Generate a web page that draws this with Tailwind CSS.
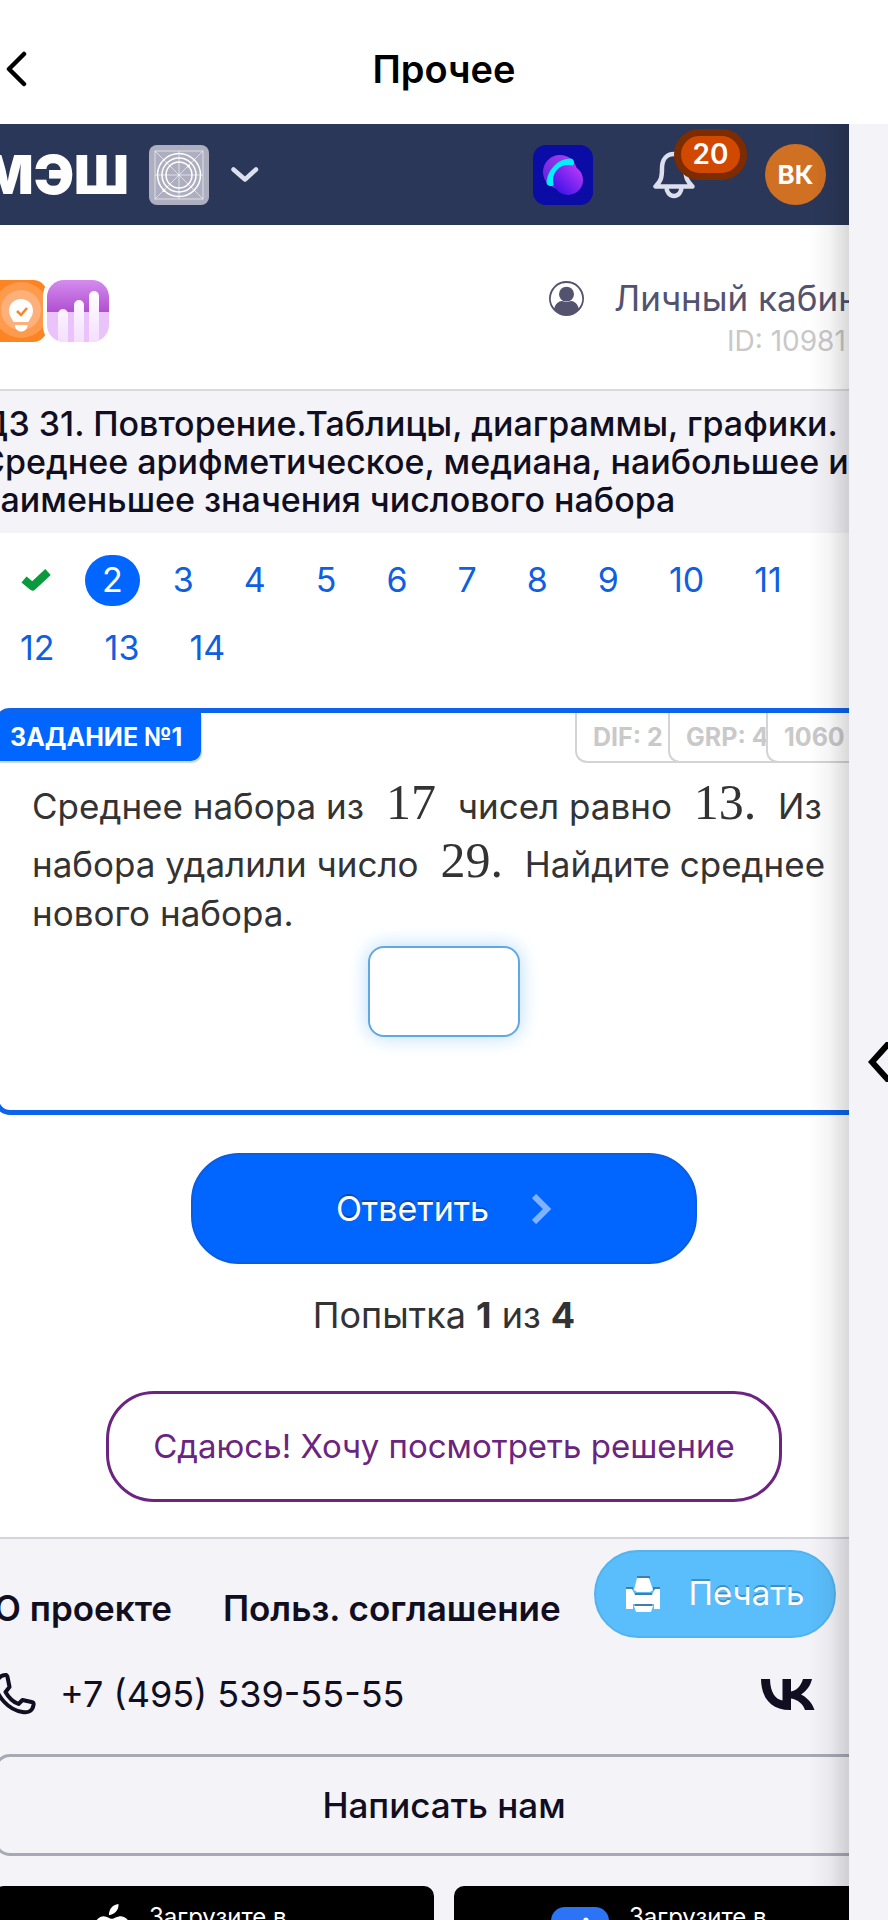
<!DOCTYPE html>
<html lang="ru">
<head>
  <meta charset="UTF-8" />
  <meta name="viewport" content="width=device-width, initial-scale=1.0" />
  <title>Прочее</title>
  <script src="https://cdn.jsdelivr.net/npm/@tailwindcss/browser@4"></script>
</head>
<body class="h-screen flex flex-col overflow-hidden bg-[#f3f3f8] font-['Inter',sans-serif] text-[#333]">

  <!-- App bar -->
  <header class="h-[124px] shrink-0 grid grid-cols-[48px_1fr_48px] items-center pt-[14px] bg-white text-black">
    <button type="button" aria-label="Назад" class="pl-[5px]">
      <svg class="w-6 h-9" viewBox="0 0 24 36" fill="none" stroke="currentColor" stroke-width="4.500" stroke-linecap="round" stroke-linejoin="round"><path d="M19 3 4 18l15 15" /></svg>
    </button>
    <h1 class="text-center text-[38px] leading-[48px] font-semibold">Прочее</h1>
  </header>

  <div class="flex flex-1 min-h-0">
    <!-- Page, wider than the panel it is shown in -->
    <div class="relative flex-1 min-w-0 overflow-hidden bg-white">
      <div class="-ml-10 -mr-[79px]">

        <nav class="h-[101px] flex items-center pl-[22px] pr-[102px] bg-[#2b3758]">
          <a href="#" class="text-white text-[54px] leading-[60px] font-black">МЭШ</a>
          <svg class="w-[60px] h-[60px] ml-5" viewBox="0 0 60 60" fill="none" stroke="#fff">
            <rect width="60" height="60" rx="8" fill="#adafc0" stroke="none" />
            <g stroke-opacity=".6"><rect x="6" y="6" width="48" height="48" /><path d="M6 6l48 48M54 6 6 54M6 30h48M30 6v48" /></g>
            <circle cx="30" cy="30" r="21.500" stroke-width="1.500" /><circle cx="30" cy="30" r="17" stroke-width="1.500" /><circle cx="30" cy="30" r="13" stroke-width="1.500" />
            <circle cx="39.500" cy="21" r="1.500" fill="#fff" stroke="none" /><circle cx="15" cy="45.500" r="1.500" fill="#fff" stroke="none" />
          </svg>
          <button type="button" aria-label="Разделы" class="ml-[22px]">
            <svg class="w-7 h-4" viewBox="0 0 28 16" fill="none" stroke="#dcdfee" stroke-width="4.500" stroke-linecap="round" stroke-linejoin="round"><path d="m2.500 2.500 11.500 10 11-10" /></svg>
          </button>
          <a href="#" aria-label="Помощник" class="ml-auto">
            <svg class="w-[60px] h-[60px]" viewBox="0 0 60 60">
              <defs>
                <linearGradient id="orb" x1="0" y1="1" x2="1" y2="0"><stop offset=".1" stop-color="#3a12e8" /><stop offset="1" stop-color="#c83cfa" /></linearGradient>
                <linearGradient id="orb2" x1="0" y1="1" x2="1" y2="0"><stop offset="0" stop-color="#5a20d8" /><stop offset="1" stop-color="#b040f5" /></linearGradient>
              </defs>
              <rect width="60" height="60" rx="13" fill="#0b0ba6" />
              <circle cx="27" cy="27" r="17" fill="url(#orb2)" />
              <path d="M17.500 37C18.500 27 27 18 37 17.500" fill="none" stroke="#00f0ff" stroke-width="8" stroke-linecap="round" />
              <circle cx="35" cy="35" r="15" fill="url(#orb)" />
            </svg>
          </a>
          <button type="button" aria-label="Уведомления, 20" class="relative ml-[60px] w-[42px] h-12">
            <svg class="w-[42px] h-12" viewBox="0 0 42 48" fill="none" stroke="#dcdfee" stroke-width="4.500" stroke-linejoin="round" stroke-linecap="round"><path d="M2.500 35.500h37c-5-5-7-8-7-18C32.500 8 28 3 21 3S9 8 9 17.500c0 10-1.500 13-6.500 18ZM13.500 36c0 5 3 9 7.500 9s7.500-4 7.500-9" /></svg>
            <span class="absolute left-[21px] -top-[22px] w-[73px] h-[51px] flex items-center justify-center rounded-full border-[7px] border-[#7d2b00] bg-[#d14900] text-white text-[28px] leading-8 font-semibold">20</span>
          </button>
          <a href="#" class="w-[61px] h-[61px] ml-[70px] rounded-full bg-[#d07022] text-white text-[26px] font-bold flex items-center justify-center">ВК</a>
        </nav>

        <div class="h-[166px] flex pl-6 border-b-2 border-[#d9d9e0]">
          <div class="flex pt-[54px]">
            <svg class="w-[64px] h-[64px]" viewBox="0 0 64 64">
              <rect x="1" y="1" width="62" height="62" rx="14" fill="#fc8423" />
              <circle cx="37" cy="31" r="28" fill="#fd9a4c" /><circle cx="37" cy="31" r="20" fill="#feb07a" />
              <path d="M37 20c-7 0-12 5-12 11.500 0 5 2.500 7 4.500 11.500h15c2-4.500 4.500-6.500 4.500-11.500C49 25 44 20 37 20ZM31 46h12.500c0 4-2.500 6.500-6.200 6.500S31 50 31 46Z" fill="#fff" />
              <path d="m33 32 4 4 6-7" fill="none" stroke="#fc8423" stroke-width="2.500" />
            </svg>
            <svg class="w-[70px] h-[70px] -ml-[5px] -mt-[2px]" viewBox="-1 0 70 70">
              <defs>
                <linearGradient id="dusk" x1="0" y1="0" x2="0" y2="1"><stop offset="0" stop-color="#d48cee" /><stop offset="1" stop-color="#b04fd0" /></linearGradient>
                <linearGradient id="bar" x1="0" y1="0" x2="0" y2="1"><stop offset="0" stop-color="#fff" /><stop offset="1" stop-color="#f3dcfd" /></linearGradient>
                <clipPath id="tile"><rect x="3" y="3" width="62" height="62" rx="17" /></clipPath>
              </defs>
              <rect x="-1" y="-1" width="70" height="70" rx="20" fill="#fff" />
              <g clip-path="url(#tile)">
                <path d="M3 3h62v32H3z" fill="url(#dusk)" /><path d="M3 35h62v31H3z" fill="#eac3fb" />
                <path d="M14 70V37a5 5 0 0 1 10 0v33ZM30 70V28a5 5 0 0 1 10 0v42ZM45 70V19a5 5 0 0 1 10 0v51Z" fill="url(#bar)" />
              </g>
            </svg>
          </div>
          <div class="ml-auto w-[379px] pt-[51px] whitespace-nowrap">
            <a href="#" class="flex items-center text-[#535370] text-[35px] leading-[44px]">
              <svg class="w-[35px] h-[35px] mr-[30px]" viewBox="0 0 36 36" fill="currentColor"><path d="M18 0a18 18 0 1 0 0 36 18 18 0 0 0 0-36Zm0 2a16 16 0 0 1 12.500 26c-1-5-5.500-8-8-7.500q-4.500 2-9 0C11 20 6.500 23 5.500 28A16 16 0 0 1 18 2Z" /><circle cx="18" cy="13.500" r="7.700" /></svg>
              Личный кабинет
            </a>
            <p class="pl-[178px] text-[28px] leading-[42px] text-[#c8c8c8]">ID: 10981</p>
          </div>
        </div>

        <h2 class="pl-5 py-[14px] bg-[#f3f3f8] text-[#100e20] text-[34px] leading-[38px] font-medium whitespace-nowrap">
          ДЗ 31. Повторение.Таблицы, диаграммы, графики.<br />
          Среднее арифметическое, медиана, наибольшее и<br />
          наименьшее значения числового набора
        </h2>

        <ol class="flex flex-wrap gap-x-4 gap-y-[17px] pt-[22px] pl-[43px] pr-[120px] text-[34px] text-[#0f5fe0] [&_a]:flex [&_a]:items-center [&_a]:h-[51px] [&_a]:px-[17px] [&_a]:pb-[2px] [&_a]:rounded-full">
          <li><a href="#" aria-label="1, решено"><svg class="w-8 h-6" viewBox="0 0 32 24" fill="none" stroke="#089a3c" stroke-width="8"><path d="M4 11.500 12.500 18.500 28 4" stroke-linejoin="round" /></svg></a></li>
          <li><a href="#" class="bg-[#0066ff] text-white">2</a></li>
          <li><a href="#">3</a></li>
          <li><a href="#">4</a></li>
          <li><a href="#">5</a></li>
          <li><a href="#">6</a></li>
          <li><a href="#">7</a></li>
          <li><a href="#">8</a></li>
          <li><a href="#">9</a></li>
          <li><a href="#">10</a></li>
          <li><a href="#">11</a></li>
          <li><a href="#">12</a></li>
          <li><a href="#">13</a></li>
          <li><a href="#">14</a></li>
        </ol>

        <form>
          <section class="mt-[34px] mx-[34px] pb-[73px] border-[5px] border-[#0b63ee] rounded-2xl">
            <div class="flex h-[50px] text-[25px] leading-8 font-bold whitespace-nowrap">
              <h3 class="h-[48px] pl-[11px] pr-[19px] pt-2 rounded-br-[10px] bg-[#0066ff] text-white shadow-[1px_2px_1px_#c9dbf8]">ЗАДАНИЕ №1</h3>
              <ul class="flex ml-auto w-[314px] text-[#c9c9c9] [&_li]:pl-4 [&_li]:pt-2 [&_li]:border-b-2 [&_li]:border-l-2 [&_li]:border-[#d4d4d4] [&_li]:rounded-bl-xl">
                <li class="w-[105px] -mr-3 shrink-0">DIF: 2</li>
                <li class="w-[110px] -mr-3 shrink-0">GRP: 4</li>
                <li class="flex-1">1060</li>
              </ul>
            </div>
            <p class="pt-[10px] pl-[33px] text-[35px] leading-[48px] whitespace-nowrap">
              Среднее набора из <span class="mx-3 text-[50px] leading-[58px] font-['Liberation_Serif',serif]">17</span> чисел равно <span class="mx-3 text-[50px] leading-[58px] font-['Liberation_Serif',serif]">13.</span> Из<br />
              набора удалили число <span class="mx-3 text-[50px] leading-[58px] font-['Liberation_Serif',serif]">29.</span> Найдите среднее<br />
              нового набора.
            </p>
            <input type="text" aria-label="Ответ" class="block mx-auto mt-[9px] w-[152px] h-[91px] rounded-2xl border-2 border-[#62a8e0] bg-white text-center text-[35px] shadow-[0_0_20px_#b5daf8] outline-none" />
          </section>

          <div class="mt-[38px] flex flex-col items-center">
            <button type="submit" class="w-[506px] h-[111px] flex items-center justify-center gap-[43px] rounded-[48px] border-2 border-[#0a5ce0] bg-[#0066ff] text-white text-[34px] [text-shadow:0_-2px_0_#0a4bb0]">
              Ответить
              <svg class="w-5 h-[30px]" viewBox="0 0 20 30" fill="none" stroke="#7fb2ff" stroke-width="6"><path d="m2 2 13 13L2 28" /></svg>
            </button>
            <p class="mt-7 text-[36px] leading-[46px]">Попытка <b>1</b> из <b>4</b></p>
            <button type="button" class="mt-[53px] w-[676px] h-[111px] rounded-[48px] border-[3px] border-[#6b2480] text-[#6b2480] text-[33px]">Сдаюсь! Хочу посмотреть решение</button>
          </div>
        </form>

        <footer class="relative mt-[35px] h-[600px] px-[34px] border-t-2 border-[#d3d3dc] bg-[#f3f3f8] text-[#100e20] text-[35px]">
          <div class="flex gap-[51px] pt-[47px] leading-[44px] font-semibold">
            <a href="#">О проекте</a>
            <a href="#">Польз. соглашение</a>
          </div>
          <div class="flex items-center justify-between mt-[42px] pr-[79px] leading-[44px]">
            <a href="tel:+74955395555" class="flex items-center gap-6 text-[36px]">
              <svg class="w-[42px] h-[42px]" viewBox="0 0 42 42" fill="none" stroke="currentColor" stroke-width="4" stroke-linejoin="round"><path d="M11 2Q13 1.500 13.500 4l2 10-4 5q5 9 13 12l4-4 9 2q2.500.5 2 3c-1 6-5 8-11 7C14 37 2 22 2 12 2 7 6 2.500 11 2Z" /></svg>
              +7 (495) 539-55-55
            </a>
            <a href="#" aria-label="ВКонтакте">
              <svg class="w-[54px] h-[31px]" viewBox="0 0 54 31" fill="currentColor"><path d="M0 0h9c.3 14 6 20.500 12.500 21.500V0H30v12.500C35 12 40 7 42 0h9c-1.500 7-6 12.500-11 15.500C45 18 51 23 53.500 31H44c-2-6-7-10.500-14-11.500V31h-1C10 31 .3 19 0 0Z" /></svg>
            </a>
          </div>
          <button type="button" class="mt-[38px] w-full h-[102px] rounded-2xl border-[3px] border-[#a9a9b5] text-[35px] font-medium">Написать нам</button>
          <div class="grid grid-cols-2 gap-5 mt-[30px] text-white text-[24px] leading-7">
            <a href="#" class="flex gap-[20px] pt-[17px] pl-[100px] h-[104px] rounded-[10px] bg-black">
              <svg class="w-[35px] h-[42px]" viewBox="0 0 40 48" fill="#fff"><path d="M17 14C17 7 21 2 28 1c.5 7-4 12-11 13ZM20 18c3 0 6-3 11-3q5 .5 8 5c-7 5-6 14 1 17-3 7-6 10-9 10s-5-2-10-2-6 2-9 2C5 47-2 36 1 25c1-7 6-10 10-10s7 3 9 3Z" /></svg>
              <span>Загрузите в</span>
            </a>
            <a href="#" class="flex gap-5 pt-[17px] pl-[97px] h-[104px] rounded-[10px] bg-black">
              <svg class="w-[58px] h-[62px]" viewBox="0 -4 58 62"><rect width="58" height="58" rx="14" fill="#2d73f5" /><path d="M31 24q0-8 2-13 5-2 5 4l-1 9h8v14H24V24Z" fill="#fff" /></svg>
              <span>Загрузите в</span>
            </a>
          </div>

          <!-- floating print button -->
          <button type="button" class="absolute top-[11px] right-[92px] w-[242px] h-[88px] flex items-center justify-center gap-[29px] rounded-full border-2 border-[#51b3f0] bg-[#5abefc] text-white text-[33px] [text-shadow:0_-2px_0_#3f8fc4]">
            <svg class="w-[34px] h-[37px]" viewBox="0 0 34 37">
              <g fill="#427fa8"><path d="M11 0h13v3H11zM0 11h7v3H0zM27 11h7v3h-7zM9 17h17v3H9zM9 28h17v3H9z" /></g>
              <path d="M11 2h12l4 12-3 2H11l-3-2ZM0 13h6l3 6h17l3-6h5v20h-6v-5H7v5H0ZM8 30h19l-2 6H10Z" fill="#fff" />
            </svg>
            Печать
          </button>
        </footer>
      </div>

      <div class="pointer-events-none absolute inset-y-0 right-0 w-10 bg-linear-to-r from-transparent via-black/4 to-black/15"></div>
    </div>

    <aside class="w-[39px] shrink-0 flex items-center justify-end pt-20 overflow-hidden text-black">
      <button type="button" aria-label="Открыть панель">
        <svg class="w-5 h-10" viewBox="0 0 20 40" fill="none" stroke="currentColor" stroke-width="6"><path d="M22 0 4 20l18 20" /></svg>
      </button>
    </aside>
  </div>

</body>
</html>
